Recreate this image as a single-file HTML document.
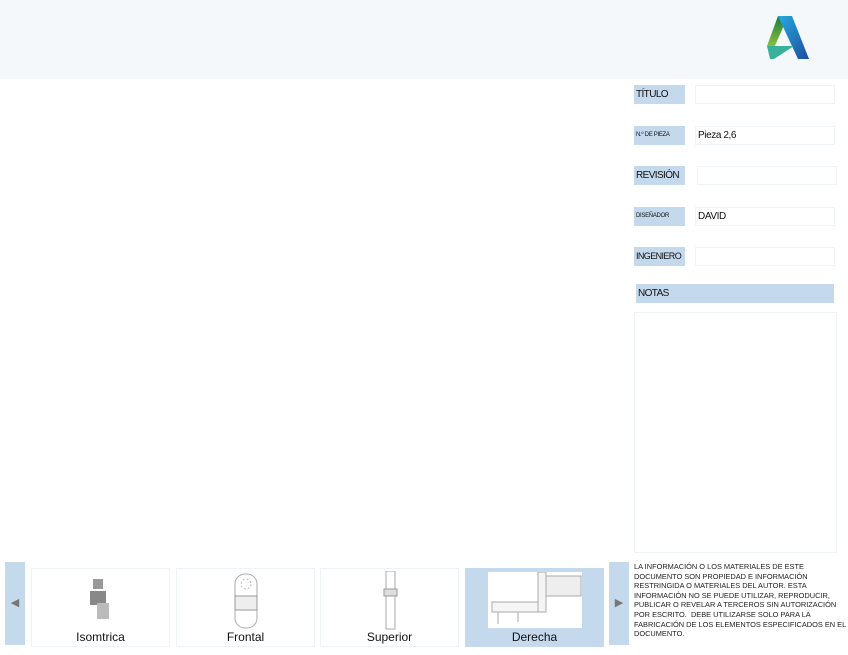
<!DOCTYPE html>
<html><head><meta charset="utf-8"><style>
*{margin:0;padding:0;box-sizing:border-box}
body{width:848px;height:655px;background:#fff;position:relative;overflow:hidden;font-family:"Liberation Sans",sans-serif;color:#111}
.a{position:absolute}
.hdr{left:0;top:0;width:848px;height:79px;background:#f5f8fb}
.lbl{background:#c5d9ec;font-size:10px;letter-spacing:-0.6px;line-height:19px;padding-left:2px;height:19px;width:51px;left:634px}
.sm{font-size:6px;letter-spacing:-0.3px}
.val{border:1px solid #eef3f8;height:19px;left:695px;width:140px;font-size:10px;line-height:17px;padding-left:2px;letter-spacing:-0.4px}
.tile{top:568px;height:79px;width:139px;border:1px solid #eef3f8;font-size:12px;text-align:center}
.tile span{position:absolute;left:0;right:0;bottom:2px}
.arr{background:#c5d9ec;width:20px;color:#777;font-size:11px;text-align:center;line-height:83px}
</style></head><body>
<div class="a hdr"></div>
<svg class="a" style="left:766px;top:15px" width="48" height="45" viewBox="0 0 48 45">
<defs><linearGradient id="g1" x1="0" y1="0" x2="0" y2="1"><stop offset="0" stop-color="#1b7a3e"/><stop offset="1" stop-color="#8dc63f"/></linearGradient>
<linearGradient id="g2" x1="0" y1="0" x2="1" y2="1"><stop offset="0" stop-color="#29a8e0"/><stop offset="1" stop-color="#1a4f9c"/></linearGradient></defs>
<polygon points="12,1 22,1 8,33 1,31" fill="url(#g1)"/>
<polygon points="12,1 26,1 43,44 32,44" fill="url(#g2)"/>
<polygon points="1,31 28,31 8,44 4,44" fill="#38b09c"/>
</svg>
<div class="a lbl" style="top:85px">TÍTULO</div><div class="a val" style="top:85px"></div>
<div class="a lbl sm" style="top:126px">N.º DE PIEZA</div><div class="a val" style="top:126px">Pieza 2,6</div>
<div class="a lbl" style="top:166px">REVISIÓN</div><div class="a val" style="top:166px;left:697px"></div>
<div class="a lbl sm" style="top:207px">DISEÑADOR</div><div class="a val" style="top:207px">DAVID</div>
<div class="a lbl" style="top:247px;font-size:9px">INGENIERO</div><div class="a val" style="top:247px"></div>
<div class="a lbl" style="top:284px;left:636px;width:198px;padding-left:2px">NOTAS</div>
<div class="a" style="left:634px;top:312px;width:203px;height:241px;border:1px solid #eef3f8"></div>
<div class="a arr" style="left:5px;top:562px;height:83px">◀</div>
<div class="a tile" style="left:31px"><svg class="a" style="left:55px;top:8px" width="30" height="46"><rect x="6" y="2" width="10" height="10" fill="#999"/><rect x="3" y="14" width="16" height="14" fill="#888"/><rect x="10" y="26" width="12" height="16" fill="#bbb"/></svg><span>Isomtrica</span></div>
<div class="a tile" style="left:176px"><svg class="a" style="left:56px;top:3px" width="28" height="58"><rect x="2" y="2" width="22" height="54" rx="10" fill="none" stroke="#aaa"/><rect x="2" y="24" width="22" height="14" fill="#eee" stroke="#999"/><circle cx="13" cy="12" r="5" fill="none" stroke="#bbb" stroke-dasharray="2"/></svg><span>Frontal</span></div>
<div class="a tile" style="left:320px"><svg class="a" style="left:60px;top:2px" width="20" height="60"><rect x="5" y="0" width="9" height="58" fill="none" stroke="#aaa"/><rect x="3" y="18" width="13" height="7" fill="#ddd" stroke="#999"/></svg><span>Superior</span></div>
<div class="a tile" style="left:465px;background:#c5d9ec;border-color:#c5d9ec"><div class="a" style="left:22px;top:3px;width:94px;height:56px;background:#fff"><svg width="94" height="56"><rect x="55" y="4" width="38" height="20" fill="#eee" stroke="#aaa"/><rect x="50" y="0" width="8" height="40" fill="#f4f4f4" stroke="#aaa"/><path d="M4 30 H50 V40 H4Z M10 40 V52 M30 40 V50" fill="#f6f6f6" stroke="#aaa"/></svg></div><span>Derecha</span></div>
<div class="a arr" style="left:609px;top:562px;height:83px">▶</div>
<div class="a" style="left:634px;top:562px;width:214px;white-space:nowrap;font-size:7.4px;line-height:9.6px;letter-spacing:0;color:#222">LA INFORMACIÓN O LOS MATERIALES DE ESTE<br>DOCUMENTO SON PROPIEDAD E INFORMACIÓN<br>RESTRINGIDA O MATERIALES DEL AUTOR. ESTA<br>INFORMACIÓN NO SE PUEDE UTILIZAR, REPRODUCIR,<br>PUBLICAR O REVELAR A TERCEROS SIN AUTORIZACIÓN<br>POR ESCRITO.&nbsp; DEBE UTILIZARSE SOLO PARA LA<br>FABRICACIÓN DE LOS ELEMENTOS ESPECIFICADOS EN EL<br>DOCUMENTO.</div>
</body></html>
